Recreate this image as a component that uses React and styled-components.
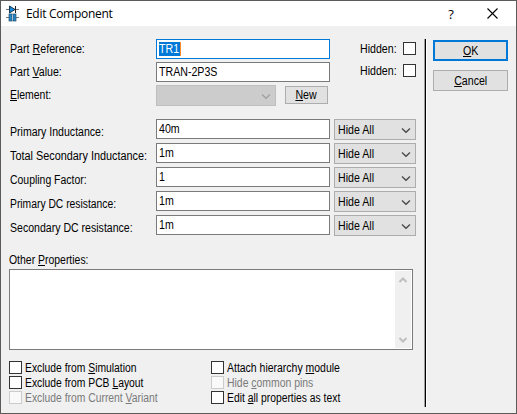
import React from "react";
import styled, { createGlobalStyle } from "styled-components";

const GlobalStyle = createGlobalStyle`
  * { box-sizing: border-box; }
  body { margin: 0; overflow: hidden; background: #f0f0f0; }
`;

const Dialog = styled.div`
  width: 517px;
  height: 414px;
  display: flex;
  flex-direction: column;
  border: 1px solid #5d5b59;
  background: #f0f0f0;
  color: #000;
  font: 12px/14px "Liberation Sans", Arial, sans-serif;
  white-space: nowrap;
`;

const TitleBar = styled.header`
  height: 25px;
  flex: none;
  display: flex;
  align-items: center;
  padding-left: 5px;
  background: #fff;
`;

const Title = styled.h1`
  margin: 0 auto 0 7px;
  width: 90px;
  font: 400 12px/18px "Open Sans", "Noto Sans", sans-serif;
  letter-spacing: -0.3px;
`;

const HelpButton = styled.span`
  width: 12px;
  margin-right: 30px;
  text-align: center;
  font: 500 13px/18px "Open Sans", sans-serif;
`;

const CloseIcon = styled.svg`
  margin-right: 18px;
`;

const Body = styled.div`
  flex: 1;
  display: flex;
  padding-top: 13px;
`;

const Main = styled.main`
  width: 415px;
  padding-left: 8px;
`;

const Divider = styled.div`
  width: 3px;
  height: 368px;
  margin-left: 8px;
  background: #000;
  border-left: 1px solid #a0a0a0;
  border-right: 1px solid #fff;
`;

const Actions = styled.div`
  display: flex;
  flex-direction: column;
  gap: 9px;
  padding: 1px 0 0 6px;
`;

const Text = styled.span`
  display: inline-block;
  line-height: 14px;
  transform: scaleX(${(p) => p.$k || 0.885});
  transform-origin: ${(p) => (p.$center ? "center" : "left")};
  color: ${(p) => (p.$muted ? "#7a7a7a" : "inherit")};
  u { text-decoration-thickness: 1px; text-underline-offset: 1px; text-decoration-skip-ink: none; }
`;

const Row = styled.div`
  display: flex;
  align-items: flex-start;
  height: ${(p) => p.$h}px;
`;

const LabelCell = styled.label`
  width: 147px;
  flex: none;
  padding: ${(p) => p.$top}px 0 0 0.5px;
`;

const Field = styled.div`
  width: 174px;
  height: 20px;
  flex: none;
  padding: 2px 0 0 2px;
  background: #fff;
  border: 1px solid ${(p) => (p.$focus ? "#0078d7" : "#7a7a7a")};
`;

const Selection = styled.span`
  display: block;
  width: 22px;
  height: 14px;
  background: #0078d7;
  border-right: 1px solid #ff8728;
  color: #fff;
`;

const Select = styled.div`
  display: flex;
  justify-content: space-between;
  width: ${(p) => p.$w}px;
  height: 21px;
  padding: 3px 4px 0 3px;
  background: ${(p) => (p.$disabled ? "#ccc" : "#e1e1e1")};
  border: 1px solid ${(p) => (p.$disabled ? "#bfbfbf" : "#adadad")};
  margin-left: ${(p) => p.$ml || 0}px;
`;

const Button = styled.button`
  display: block;
  width: ${(p) => p.$w || 75}px;
  height: ${(p) => p.$h || 21}px;
  margin: ${(p) => p.$m || 0};
  padding: 0;
  font: inherit;
  line-height: 14px;
  color: #000;
  text-align: center;
  background: #e1e1e1;
  border: ${(p) => (p.$primary ? "2px solid #0078d7" : "1px solid #adadad")};
`;

const HiddenCell = styled.div`
  display: flex;
  margin-left: 30px;
  padding-top: ${(p) => p.$top}px;
`;

const HiddenLabel = styled.span`
  width: 43px;
`;

const Box = styled.span`
  width: 13px;
  height: 13px;
  flex: none;
  background: ${(p) => (p.$disabled ? "#f9f9f9" : "#fff")};
  border: 1px solid ${(p) => (p.$disabled ? "#ccc" : "#333")};
`;

const Params = styled.section`
  margin-top: 11px;
`;

const Heading = styled.div`
  margin-top: 14px;
  height: 16px;
`;

const TextArea = styled.div`
  display: flex;
  justify-content: flex-end;
  width: 404px;
  height: 81px;
  padding: 1px;
  background: #fff;
  border: 1px solid #7a7a7a;
`;

const ScrollBar = styled.div`
  width: 16px;
  display: flex;
  flex-direction: column;
  justify-content: space-between;
  align-items: center;
  padding: 6px 0 5px;
  background: #f0f0f0;
`;

const Options = styled.section`
  display: grid;
  grid-template-columns: 202px 200px;
  grid-auto-rows: 15px;
  margin-top: 11px;
`;

const Option = styled.label`
  display: flex;
  gap: 3px;
`;

const Chevron = ({ color = "#444" }) => (
  <svg width="10" height="13" viewBox="0 0 10 13">
    <path d="M1 5.5 L5 9.3 L9 5.5" fill="none" stroke={color} strokeWidth="1.2" />
  </svg>
);

const ScrollArrow = ({ down }) => (
  <svg width="8" height="6" viewBox="0 0 8 6">
    <path d={down ? "M.5 1 L4 4.5 L7.5 1" : "M.5 5 L4 1.5 L7.5 5"} fill="none" stroke="#bfbfbf" strokeWidth="2" />
  </svg>
);

const AppIcon = () => (
  <svg width="13" height="17" viewBox="0 0 13 17">
    <path d="M0 4.5H13M0 12.5H13" stroke="#777" />
    <path d="M3.5 1V8L9 4.5Z" fill="#1688d8" stroke="#173650" />
    <path d="M9.5 1V8" stroke="#222" />
    <rect x="3" y="9" width="3" height="7" fill="#2585c5" stroke="#24516f" strokeWidth=".7" />
    <rect x="6" y="10" width="1" height="5" fill="#fff" />
    <rect x="7" y="9" width="3" height="7" fill="#2585c5" stroke="#24516f" strokeWidth=".7" />
  </svg>
);

const params = [
  ["Primary Inductance:", "40m", 0.88],
  ["Total Secondary Inductance:", "1m", 0.905],
  ["Coupling Factor:", "1", 0.87],
  ["Primary DC resistance:", "1m", 0.86],
  ["Secondary DC resistance:", "1m", 0.88],
];

const options = [
  { label: <>Exclude from <u>S</u>imulation</>, k: 0.862 },
  { label: <>Attach hierarchy <u>m</u>odule</>, k: 0.872 },
  { label: <>Exclude from PCB <u>L</u>ayout</>, k: 0.862 },
  { label: <>Hide <u>c</u>ommon pins</>, k: 0.868, disabled: true },
  { label: <>Exclude from Current <u>V</u>ariant</>, k: 0.862, disabled: true },
  { label: <>Edit <u>a</u>ll properties as text</>, k: 0.862 },
];

const Hidden = ({ top }) => (
  <HiddenCell $top={top}>
    <HiddenLabel><Text>Hidden:</Text></HiddenLabel>
    <Box />
  </HiddenCell>
);

export default function App() {
  return (
    <Dialog>
      <GlobalStyle />
      <TitleBar>
        <AppIcon />
        <Title>Edit Component</Title>
        <HelpButton>?</HelpButton>
        <CloseIcon width="11" height="11" viewBox="0 0 11 11">
          <path d="M.5 .5L10.5 10.5M10.5 .5L.5 10.5" stroke="#000" strokeWidth="1.1" />
        </CloseIcon>
      </TitleBar>
      <Body>
        <Main>
          <Row $h={23}>
            <LabelCell $top={3}><Text $k={0.89}>Part <u>R</u>eference:</Text></LabelCell>
            <Field $focus><Selection><Text>TR1</Text></Selection></Field>
            <Hidden top={3} />
          </Row>
          <Row $h={23}>
            <LabelCell $top={3}><Text>Part <u>V</u>alue:</Text></LabelCell>
            <Field><Text>TRAN-2P3S</Text></Field>
            <Hidden top={2} />
          </Row>
          <Row $h={23}>
            <LabelCell $top={3}><Text $k={0.87}><u>E</u>lement:</Text></LabelCell>
            <Select $w={120} $disabled><span /><Chevron color="#a0a0a0" /></Select>
            <Button $w={43} $h={18} $m="1px 0 0 9px"><Text $center><u>N</u>ew</Text></Button>
          </Row>
          <Params>
            {params.map(([label, value, k]) => (
              <Row $h={24} key={label}>
                <LabelCell $top={6}><Text $k={k}>{label}</Text></LabelCell>
                <Field><Text>{value}</Text></Field>
                <Select $w={82} $ml={4}><Text>Hide All</Text><Chevron /></Select>
              </Row>
            ))}
          </Params>
          <Heading><Text $k={0.87}>Other <u>P</u>roperties:</Text></Heading>
          <TextArea>
            <ScrollBar><ScrollArrow /><ScrollArrow down /></ScrollBar>
          </TextArea>
          <Options>
            {options.map(({ label, k, disabled }, i) => (
              <Option key={i}>
                <Box $disabled={disabled} />
                <Text $k={k} $muted={disabled}>{label}</Text>
              </Option>
            ))}
          </Options>
        </Main>
        <Divider />
        <Actions>
          <Button $primary><Text $center><u>O</u>K</Text></Button>
          <Button><Text $center><u>C</u>ancel</Text></Button>
        </Actions>
      </Body>
    </Dialog>
  );
}
